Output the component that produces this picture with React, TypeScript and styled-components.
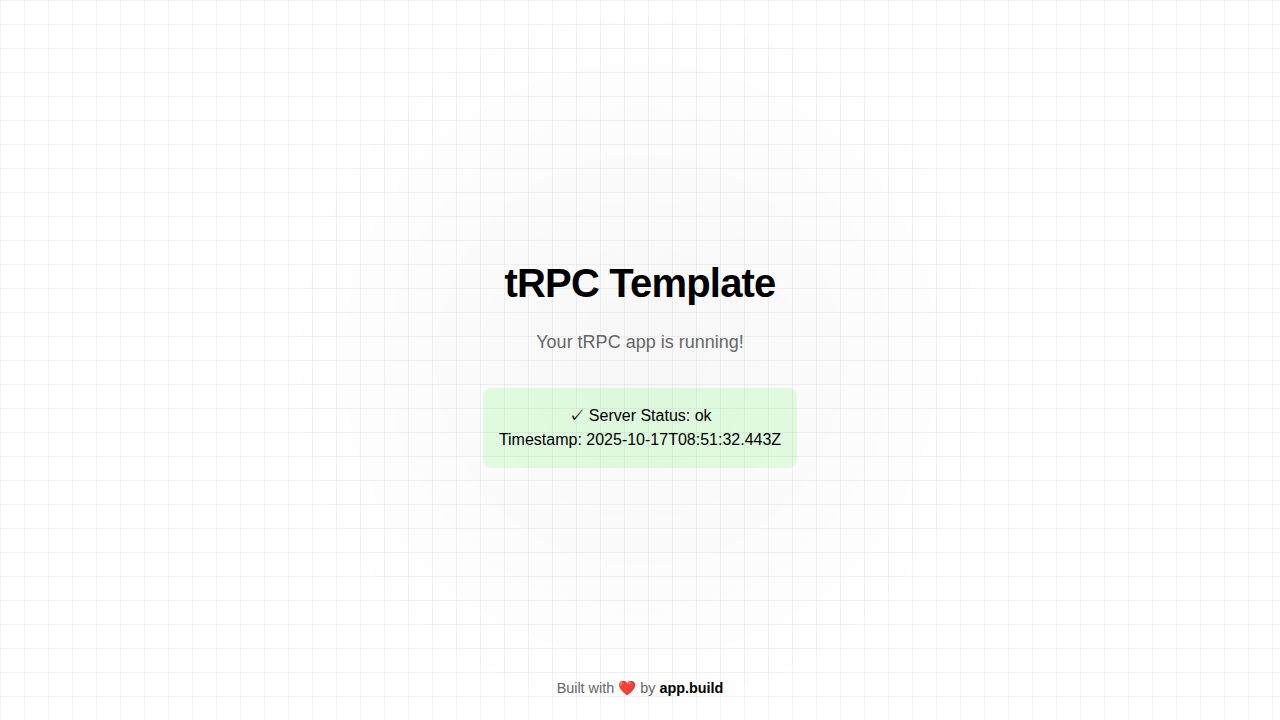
import React from 'react';
import styled, { createGlobalStyle } from 'styled-components';

const GlobalStyle = createGlobalStyle`
  *, *::before, *::after { box-sizing: border-box; }
  body { margin: 0; background: #fff; }
`;

// Concentric glow bands, from the innermost radius outwards, one alpha level apart.
const glowRadii = [67, 113, 159, 205, 251, 297, 343];
const glowStops = glowRadii
  .map((radius, i) => {
    const color = `rgba(0, 0, 0, ${((glowRadii.length - i) / 255).toFixed(5)})`;
    return `${color} ${i === 0 ? 0 : glowRadii[i - 1]}px, ${color} ${radius}px`;
  })
  .join(', ');

const Page = styled.div`
  position: relative;
  min-height: 100vh;
  display: flex;
  flex-direction: column;
  align-items: center;
  justify-content: center;
  overflow: hidden;
  color: #000;
  background-image:
    radial-gradient(circle at center, ${glowStops}, transparent 343px),
    linear-gradient(to right, rgba(0, 0, 0, 0.05) 1px, transparent 1px),
    linear-gradient(to bottom, rgba(0, 0, 0, 0.05) 1px, transparent 1px);
  background-size: 100% 100%, 24px 24px, 24px 24px;
  font-family: "Liberation Sans", Arial, IPAGothic, sans-serif;
  font-size: 16px;
  line-height: 24px;
  text-align: center;
`;

const Content = styled.main`
  display: flex;
  flex-direction: column;
  align-items: center;
`;

const Title = styled.h1`
  margin: 0 0 16px;
  font-size: 40px;
  line-height: 60px;
  font-weight: 700;
  letter-spacing: -0.02em;
`;

const Subtitle = styled.p`
  margin: 0 0 32px;
  font-size: 18px;
  line-height: 27px;
  color: #666;
`;

const StatusCard = styled.div`
  padding: 16px;
  border-radius: 8px;
  background: rgba(0, 255, 0, 0.1);
`;

const StatusLine = styled.div`
  height: 24px;
`;

const Footer = styled.footer`
  position: absolute;
  bottom: 21px;
  font-size: 14.4px;
  line-height: 22px;
  color: #666;
`;

const FooterLink = styled.a`
  color: #000;
  font-weight: 700;
  text-decoration: none;
`;

export default function App() {
  return (
    <>
      <GlobalStyle />
      <Page>
        <Content>
          <Title>tRPC Template</Title>
          <Subtitle>Your tRPC app is running!</Subtitle>
          <StatusCard>
            <StatusLine>✓ Server Status: ok</StatusLine>
            <StatusLine>Timestamp: 2025-10-17T08:51:32.443Z</StatusLine>
          </StatusCard>
        </Content>
        <Footer>
          Built with ❤️ by <FooterLink>app.build</FooterLink>
        </Footer>
      </Page>
    </>
  );
}
